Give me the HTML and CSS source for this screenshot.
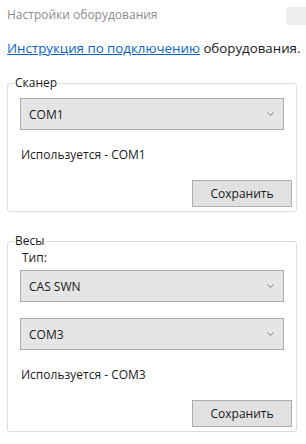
FILE: index.html
```html
<!DOCTYPE html>
<html lang="ru">

<head>
    <meta charset="UTF-8">
    <meta name="viewport" content="width=device-width, initial-scale=1.0">
    <title>Настройки оборудования</title>
    <link rel="stylesheet" href="styles.css">
</head>

<body>
    <div class="titlebar">
        <span class="title">Настройки оборудования</span>
        <span class="close"></span>
    </div>

    <p class="intro">
        <a href="#">Инструкция по подключению</a> оборудования.
    </p>

    <fieldset class="group">
        <legend>Сканер</legend>
        <div class="combo">
            <span>COM1</span>
            <svg width="7" height="5" viewBox="0 0 7 5"><path d="M0.5 0.5 L3.5 3.5 L6.5 0.5" fill="none" stroke="#7a7a7a" stroke-width="1"/></svg>
        </div>
        <p class="status">Используется - COM1</p>
        <div class="actions">
            <button>Сохранить</button>
        </div>
    </fieldset>

    <fieldset class="group second">
        <legend>Весы</legend>
        <div class="caption">Тип:</div>
        <div class="combo">
            <span>CAS SWN</span>
            <svg width="7" height="5" viewBox="0 0 7 5"><path d="M0.5 0.5 L3.5 3.5 L6.5 0.5" fill="none" stroke="#7a7a7a" stroke-width="1"/></svg>
        </div>
        <div class="combo next">
            <span>COM3</span>
            <svg width="7" height="5" viewBox="0 0 7 5"><path d="M0.5 0.5 L3.5 3.5 L6.5 0.5" fill="none" stroke="#7a7a7a" stroke-width="1"/></svg>
        </div>
        <p class="status">Используется - COM3</p>
        <div class="actions">
            <button>Сохранить</button>
        </div>
    </fieldset>
</body>

</html>
```

FILE: styles.css
```css
body {
    margin: 0;
    width: 306px;
    height: 444px;
    background: #ffffff;
    font-family: 'Open Sans', 'Noto Sans', sans-serif;
    font-size: 12px;
    color: #1a1a1a;
    overflow: hidden;
}

.titlebar {
    display: flex;
    align-items: flex-start;
    height: 32px;
    padding-left: 7px;
}

.title {
    margin-top: 6px;
    line-height: 18px;
    font-size: 12px;
    color: #8c8c8c;
}

.close {
    margin-left: auto;
    margin-top: 7px;
    width: 20px;
    height: 18px;
    background: #efefef;
}

.intro {
    margin: 6px 0 0 7px;
    font-size: 13.3px;
    line-height: 20px;
    white-space: nowrap;
}

.intro a {
    color: #0a63c9;
    text-decoration: underline;
}

.group {
    margin: 17px 9px 0 7px;
    padding: 0 12px 4px 12px;
    border: 1px solid #dcdcdc;
    border-radius: 3px;
    min-width: 0;
}

.group legend {
    padding: 0 1px;
    margin-left: -6px;
    line-height: 16px;
    font-size: 12px;
}

.group.second {
    margin-top: 21px;
}

.combo {
    display: flex;
    align-items: center;
    justify-content: space-between;
    height: 30px;
    margin-top: 7px;
    padding: 0 8px 0 8px;
    background: #e5e5e5;
    border: 1px solid #acacac;
    font-size: 12px;
}

.combo svg {
    margin-right: 1px;
}

.combo.next {
    margin-top: 16px;
}

.caption {
    margin: 2px 0 -2px 2px;
    line-height: 14px;
}

.status {
    margin: 17px 0 0 1px;
    line-height: 16px;
}

.actions {
    display: flex;
    justify-content: flex-end;
    margin: 17px -8px 0 0;
}

.actions button {
    width: 100px;
    height: 27px;
    background: #e1e1e1;
    border: 1px solid #adadad;
    border-radius: 0;
    font-family: inherit;
    font-size: 12px;
    color: #1a1a1a;
    padding: 0;
}
```
